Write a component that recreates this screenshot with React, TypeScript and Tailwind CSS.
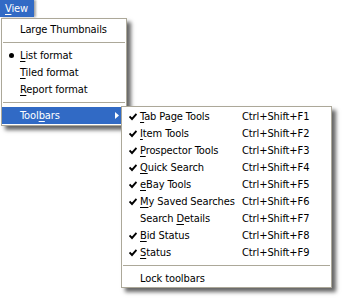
import React from "react";

const font = { fontFamily: '"DejaVu Sans Condensed", "DejaVu Sans", sans-serif' };

function U({ children }: { children: React.ReactNode }) {
  return <span className="underline underline-offset-[2px] decoration-[1px]">{children}</span>;
}

function Check() {
  return (
    <svg width="8" height="8" viewBox="0 0 8 8" className="block">
      <path d="M0.5 3.5 L3 6 L7.5 1" stroke="#000" strokeWidth="1.9" fill="none" />
    </svg>
  );
}

function Sep() {
  return (
    <div className="h-[9px] flex items-center px-[1px]">
      <div className="h-px w-full bg-[#aca899]" />
    </div>
  );
}

type SubItem = { check: boolean; label: React.ReactNode; key: string };

const subItems: SubItem[] = [
  { check: true, label: <><U>T</U>ab Page Tools</>, key: "Ctrl+Shift+F1" },
  { check: true, label: <><U>I</U>tem Tools</>, key: "Ctrl+Shift+F2" },
  { check: true, label: <><U>P</U>rospector Tools</>, key: "Ctrl+Shift+F3" },
  { check: true, label: <><U>Q</U>uick Search</>, key: "Ctrl+Shift+F4" },
  { check: true, label: <><U>e</U>Bay Tools</>, key: "Ctrl+Shift+F5" },
  { check: true, label: <><U>M</U>y Saved Searches</>, key: "Ctrl+Shift+F6" },
  { check: false, label: <>Search <U>D</U>etails</>, key: "Ctrl+Shift+F7" },
  { check: true, label: <><U>B</U>id Status</>, key: "Ctrl+Shift+F8" },
  { check: true, label: <><U>S</U>tatus</>, key: "Ctrl+Shift+F9" },
];

export default function App() {
  return (
    <div className="relative w-[342px] h-[300px] bg-white text-[11px] text-black leading-none tracking-[-0.1px]" style={font}>
      <div className="h-[17px] w-[34px] bg-[#316ac5] text-white flex items-center pl-[5px] shadow-[2px_0_2px_rgba(0,0,0,0.35)]">
        <span><U>V</U>iew</span>
      </div>
      <div className="ml-[1px] mt-[1px] w-[126px] bg-white border border-[#aca899] pt-[2px] pb-[1px] shadow-[4px_4px_4px_rgba(0,0,0,0.6)]">
        <div className="h-[17px] flex items-center pl-[18px]">Large Thumbnails</div>
        <Sep />
        <div className="h-[17px] flex items-center relative pl-[18px]">
          <div className="absolute left-[7px] top-[6px] w-[5px] h-[5px] rounded-full bg-black" />
          <span><U>L</U>ist format</span>
        </div>
        <div className="h-[17px] flex items-center pl-[18px]"><span><U>T</U>iled format</span></div>
        <div className="h-[17px] flex items-center pl-[18px]"><span><U>R</U>eport format</span></div>
        <Sep />
        <div className="h-[17px] flex items-center pl-[18px] bg-[#316ac5] text-white relative">
          <span>Tool<U>b</U>ars</span>
          <svg width="4" height="7" viewBox="0 0 4 7" className="absolute left-[113px] top-[5px]">
            <path d="M0 0 L4 3.5 L0 7 Z" fill="#fff" />
          </svg>
        </div>
      </div>

      <div className="absolute left-[121px] top-[106px] w-[211px] bg-white border border-[#aca899] pt-[1px] shadow-[4px_4px_4px_rgba(0,0,0,0.6)]">
        {subItems.map((it, i) => (
          <div key={i} className="h-[17px] flex items-center">
            <div className="w-[18px] flex justify-center pl-[3px]">{it.check && <Check />}</div>
            <div className="w-[102px]">{it.label}</div>
            <div>{it.key}</div>
          </div>
        ))}
        <Sep />
        <div className="h-[17px] flex items-center pl-[18px]">Lock toolbars</div>
      </div>
    </div>
  );
}
